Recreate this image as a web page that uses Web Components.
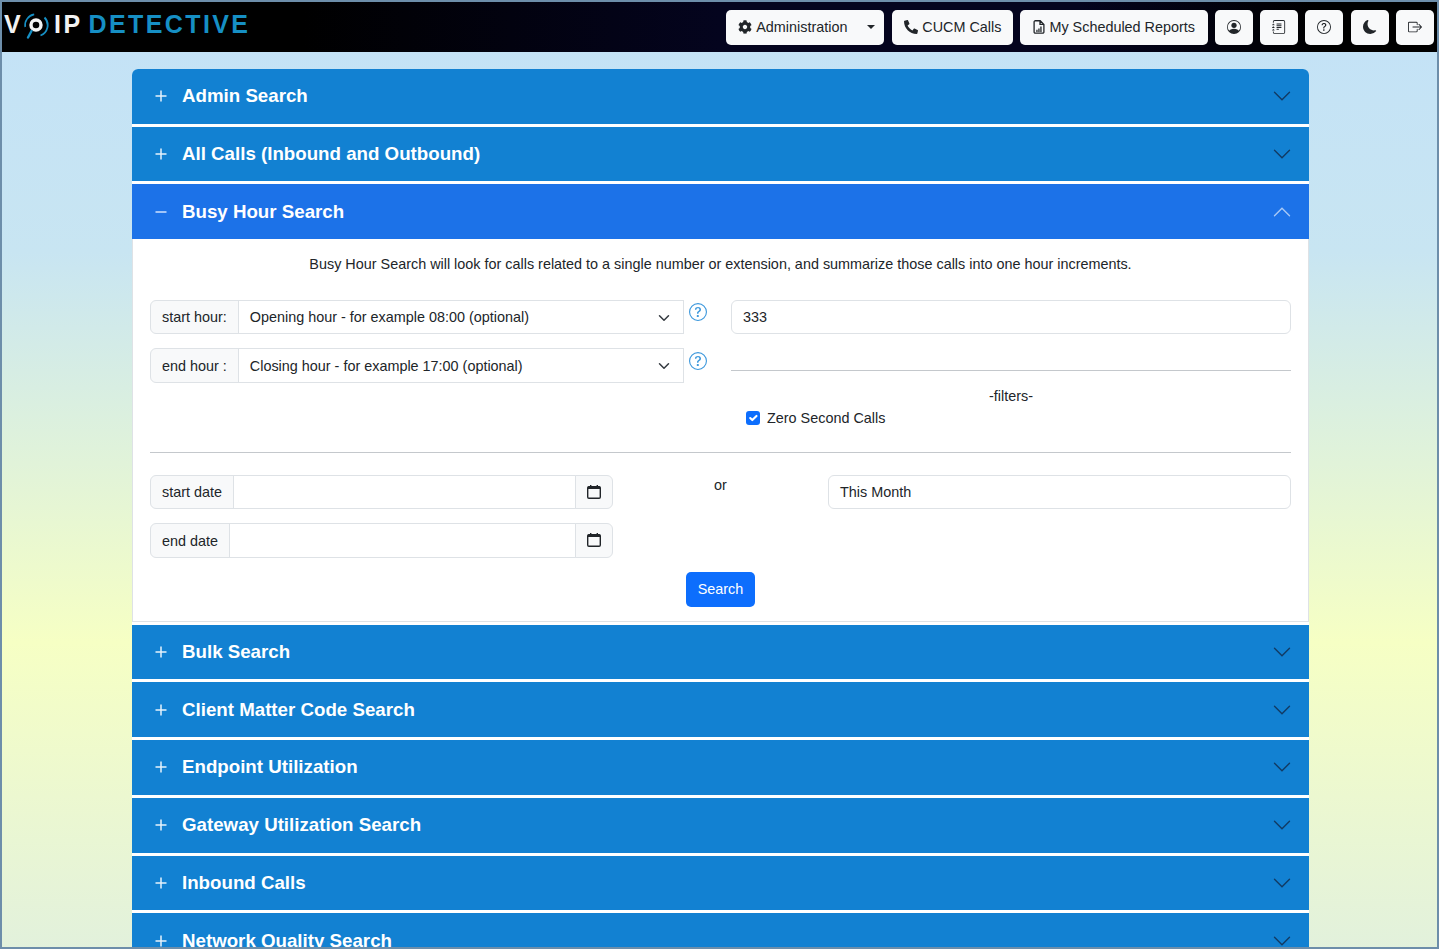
<!DOCTYPE html>
<html lang="en">
<head>
<meta charset="utf-8">
<title>VoIP Detective</title>
<style>
  html, body { margin: 0; padding: 0; height: 100%; overflow: hidden; }
  body { font-family: "Liberation Sans", Arial, sans-serif; font-size: 14.4px; color: #212529; }
</style>
</head>
<body>
<vd-app>
  <vd-navbar slot="nav"></vd-navbar>
  <vd-accordion-item heading="Admin Search"></vd-accordion-item>
  <vd-accordion-item heading="All Calls (Inbound and Outbound)"></vd-accordion-item>
  <vd-accordion-item heading="Busy Hour Search" open>
    <vd-busy-form></vd-busy-form>
  </vd-accordion-item>
  <vd-accordion-item heading="Bulk Search"></vd-accordion-item>
  <vd-accordion-item heading="Client Matter Code Search"></vd-accordion-item>
  <vd-accordion-item heading="Endpoint Utilization"></vd-accordion-item>
  <vd-accordion-item heading="Gateway Utilization Search"></vd-accordion-item>
  <vd-accordion-item heading="Inbound Calls"></vd-accordion-item>
  <vd-accordion-item heading="Network Quality Search"></vd-accordion-item>
</vd-app>

<script>
const icons = {
  gear: `<svg viewBox="0 0 512 512" width="14" height="14" fill="currentColor"><path d="M487.4 315.7l-42.6-24.6c4.3-23.2 4.3-47 0-70.2l42.6-24.6c4.9-2.8 7.1-8.6 5.5-14-11.1-35.6-30-67.8-54.7-94.6-3.8-4.1-10-5.1-14.8-2.3L380.8 110c-17.9-15.4-38.5-27.3-60.8-35.1V25.8c0-5.6-3.9-10.5-9.4-11.7-36.7-8.2-74.3-7.8-109.2 0-5.5 1.2-9.4 6.1-9.4 11.7V75c-22.2 7.9-42.8 19.8-60.8 35.1L88.7 85.5c-4.9-2.8-11-1.9-14.8 2.3-24.7 26.7-43.6 58.9-54.7 94.6-1.7 5.4.6 11.2 5.5 14L67.3 221c-4.3 23.2-4.3 47 0 70.2l-42.6 24.6c-4.9 2.8-7.1 8.6-5.5 14 11.1 35.6 30 67.8 54.7 94.6 3.8 4.1 10 5.1 14.8 2.3l42.6-24.6c17.9 15.4 38.5 27.3 60.8 35.1v49.2c0 5.6 3.9 10.5 9.4 11.7 36.7 8.2 74.3 7.8 109.2 0 5.5-1.2 9.4-6.1 9.4-11.7v-49.2c22.2-7.9 42.8-19.8 60.8-35.1l42.6 24.6c4.9 2.8 11 1.9 14.8-2.3 24.7-26.7 43.6-58.9 54.7-94.6 1.5-5.5-.7-11.3-5.6-14.1zM256 336c-44.1 0-80-35.9-80-80s35.9-80 80-80 80 35.9 80 80-35.9 80-80 80z"/></svg>`,
  phone: `<svg viewBox="0 0 512 512" width="14" height="14" fill="currentColor" style="transform:scaleX(-1)"><path d="M493.4 24.6l-104-24c-11.3-2.6-22.9 3.3-27.5 13.9l-48 112c-4.2 9.8-1.4 21.3 6.9 28l60.6 49.6c-36 76.7-98.9 140.5-177.2 177.2l-49.6-60.6c-6.8-8.3-18.2-11.1-28-6.9l-112 48C3.9 366.5-2 378.1.6 389.4l24 104C27.1 504.2 36.7 512 48 512c256.1 0 464-207.5 464-464 0-11.2-7.7-20.9-18.6-23.4z"/></svg>`,
  report: `<svg viewBox="0 0 14 14" width="14" height="14"><path d="M3 .75h5.2L11.9 4.4V12a1.2 1.2 0 0 1-1.2 1.2H3.3A1.2 1.2 0 0 1 2.1 12V1.95A1.2 1.2 0 0 1 3.3.75zM8 1v3.4h3.6" fill="none" stroke="currentColor" stroke-width="1.3"/><path d="M4.3 9.8h1.3v2.2H4.3zM6.3 8.4h1.3V12H6.3zM8.3 6.6h1.3V12H8.3z" fill="currentColor"/></svg>`,
  person: `<svg viewBox="0 0 16 16" width="14" height="14" fill="currentColor"><path d="M11 6a3 3 0 1 1-6 0 3 3 0 0 1 6 0z"/><path fill-rule="evenodd" d="M0 8a8 8 0 1 1 16 0A8 8 0 0 1 0 8zm8-7a7 7 0 0 0-5.468 11.37C3.242 11.226 4.805 10 8 10s4.757 1.225 5.468 2.37A7 7 0 0 0 8 1z"/></svg>`,
  journal: `<svg viewBox="0 0 16 16" width="14" height="14" fill="currentColor"><path d="M5 10.5a.5.5 0 0 1 .5-.5h2a.5.5 0 0 1 0 1h-2a.5.5 0 0 1-.5-.5zm0-2a.5.5 0 0 1 .5-.5h5a.5.5 0 0 1 0 1h-5a.5.5 0 0 1-.5-.5zm0-2a.5.5 0 0 1 .5-.5h5a.5.5 0 0 1 0 1h-5a.5.5 0 0 1-.5-.5zm0-2a.5.5 0 0 1 .5-.5h5a.5.5 0 0 1 0 1h-5a.5.5 0 0 1-.5-.5z"/><path d="M3 0h10a2 2 0 0 1 2 2v12a2 2 0 0 1-2 2H3a2 2 0 0 1-2-2v-1h1v1a1 1 0 0 0 1 1h10a1 1 0 0 0 1-1V2a1 1 0 0 0-1-1H3a1 1 0 0 0-1 1v1H1V2a2 2 0 0 1 2-2z"/><path d="M1 5v-.5a.5.5 0 0 1 1 0V5h.5a.5.5 0 0 1 0 1h-2a.5.5 0 0 1 0-1H1zm0 3v-.5a.5.5 0 0 1 1 0V8h.5a.5.5 0 0 1 0 1h-2a.5.5 0 0 1 0-1H1zm0 3v-.5a.5.5 0 0 1 1 0v.5h.5a.5.5 0 0 1 0 1h-2a.5.5 0 0 1 0-1H1z"/></svg>`,
  question: `<svg viewBox="0 0 16 16" width="14" height="14" fill="currentColor"><path d="M8 15A7 7 0 1 1 8 1a7 7 0 0 1 0 14zm0 1A8 8 0 1 0 8 0a8 8 0 0 0 0 16z"/><path d="M5.255 5.786a.237.237 0 0 0 .241.247h.825c.138 0 .248-.113.266-.25.09-.656.54-1.134 1.342-1.134.686 0 1.314.343 1.314 1.168 0 .635-.374.927-.965 1.371-.673.489-1.206 1.06-1.168 1.987l.003.217a.25.25 0 0 0 .25.246h.811a.25.25 0 0 0 .25-.25v-.105c0-.718.273-.927 1.01-1.486.609-.463 1.244-.977 1.244-2.056 0-1.511-1.276-2.241-2.673-2.241-1.267 0-2.655.59-2.75 2.286zm1.557 5.763c0 .533.425.927 1.01.927.609 0 1.028-.394 1.028-.927 0-.552-.42-.94-1.029-.94-.584 0-1.009.388-1.009.94z"/></svg>`,
  moon: `<svg viewBox="0 0 16 16" width="14" height="14" fill="currentColor"><path d="M6 .278a.768.768 0 0 1 .08.858 7.208 7.208 0 0 0-.878 3.46c0 4.021 3.278 7.277 7.318 7.277.527 0 1.04-.055 1.533-.16a.787.787 0 0 1 .81.316.733.733 0 0 1-.031.893A8.349 8.349 0 0 1 8.344 16C3.734 16 0 12.286 0 7.71 0 4.266 2.114 1.312 5.124.06A.752.752 0 0 1 6 .278z"/></svg>`,
  logout: `<svg viewBox="0 0 16 16" width="14" height="14" fill="currentColor"><path fill-rule="evenodd" d="M10 12.5a.5.5 0 0 1-.5.5h-8a.5.5 0 0 1-.5-.5v-9a.5.5 0 0 1 .5-.5h8a.5.5 0 0 1 .5.5v2a.5.5 0 0 0 1 0v-2A1.5 1.5 0 0 0 9.5 2h-8A1.5 1.5 0 0 0 0 3.5v9A1.5 1.5 0 0 0 1.5 14h8a1.5 1.5 0 0 0 1.5-1.5v-2a.5.5 0 0 0-1 0v2z"/><path fill-rule="evenodd" d="M15.854 8.354a.5.5 0 0 0 0-.708l-3-3a.5.5 0 0 0-.708.708L14.293 7.5H5.5a.5.5 0 0 0 0 1h8.793l-2.147 2.146a.5.5 0 0 0 .708.708l3-3z"/></svg>`,
  calendar: `<svg viewBox="0 0 16 16" width="16" height="16"><rect x="1.7" y="2.6" width="12.6" height="11.7" rx="1.2" fill="none" stroke="currentColor" stroke-width="1.4"/><path d="M2 2.5h12v2.4H2zM4 1h1.4v2H4zM10.6 1H12v2h-1.4z" fill="currentColor"/></svg>`,
  chevron: `<svg viewBox="0 0 16 16" width="12" height="12" fill="none" stroke="#343a40" stroke-width="2" stroke-linecap="round" stroke-linejoin="round"><path d="M2 5l6 6 6-6"/></svg>`,
  check: `<svg viewBox="0 0 20 20" width="14" height="14" fill="none" stroke="#fff" stroke-width="3" stroke-linecap="round" stroke-linejoin="round"><path d="M6 10l3 3 6-6"/></svg>`
};

class VdApp extends HTMLElement {
  connectedCallback() {
    this.attachShadow({mode: 'open'});
    this.shadowRoot.innerHTML = `
      <style>
        :host {
          display: flex;
          flex-direction: column;
          box-sizing: border-box;
          height: 949px;
          overflow: hidden;
          border: 2px solid #6d8eaa;
          background: linear-gradient(180deg, #c3e2f7 0, #c8e5f2 250px, #f6ffc4 640px, #e2f1dc 947px);
        }
        .main {
          padding: 16.75px 0 0 130px;
        }
        .accordion {
          width: 1177px;
          background: #fff;
          border-radius: 6px 6px 0 0;
          overflow: hidden;
        }
      </style>
      <slot name="nav"></slot>
      <div class="main"><div class="accordion"><slot></slot></div></div>
    `;
  }
}

class VdNavbar extends HTMLElement {
  connectedCallback() {
    this.attachShadow({mode: 'open'});
    this.shadowRoot.innerHTML = `
      <style>
        :host {
          display: flex;
          align-items: center;
          justify-content: space-between;
          flex: none;
          height: 50px;
          padding: 0 3px 0 2px;
          box-sizing: border-box;
          background: linear-gradient(90deg, #000 0, #000 300px, #04041e 50%, #04041e 75%, #000 92%);
        }
        .logo {
          display: flex;
          align-items: center;
          margin-top: -6px;
          font: bold 25px/30px "Liberation Sans", Arial, sans-serif;
          letter-spacing: 2.4px;
          color: #f2f2f2;
          white-space: nowrap;
        }
        .logo svg { margin: 6px 5px 0 0; flex: none; }
        .logo b { color: #168fc4; margin-left: 6px; font-weight: bold; }
        .btns { display: flex; align-items: center; gap: 7px; }
        .btn {
          display: flex;
          align-items: center;
          gap: 4px;
          box-sizing: border-box;
          height: 35px;
          padding: 0 12px;
          background: #f8f9fa;
          border-radius: 5px;
          color: #212529;
          white-space: nowrap;
          font-size: 14.4px;
        }
        .btn.icon { width: 38px; padding: 0; justify-content: center; }
        .btn.admin { width: 158px; gap: 4px; margin-right: 1px; }
        .btn.reports { gap: 3px; padding-right: 13px; }
        .caret {
          margin-left: auto;
          margin-right: -3px;
          border: 4px solid transparent;
          border-top-color: #212529;
          border-bottom: 0;
        }
        .btn.moon { margin-left: 1px; }
      </style>
      <div class="logo">
        <span>V</span>
        <svg width="26" height="28" viewBox="0 0 26 28" fill="none">
          <circle cx="13" cy="12" r="5" stroke="#f2f2f2" stroke-width="3.4"/>
          <path d="M2.2 14a11 11 0 0 1 9-12.6" stroke="#168fc4" stroke-width="1.6"/>
          <path d="M21.5 4.5a11 11 0 0 1-4 18" stroke="#168fc4" stroke-width="1.8"/>
          <path d="M8.5 18l-3.5 6.5" stroke="#168fc4" stroke-width="2.4" stroke-linecap="round"/>
        </svg>
        <span>IP</span><b>DETECTIVE</b>
      </div>
      <div class="btns">
        <div class="btn admin">${icons.gear}<span>Administration</span><span class="caret"></span></div>
        <div class="btn">${icons.phone}<span>CUCM Calls</span></div>
        <div class="btn reports">${icons.report}<span>My Scheduled Reports</span></div>
        <div class="btn icon">${icons.person}</div>
        <div class="btn icon">${icons.journal}</div>
        <div class="btn icon">${icons.question}</div>
        <div class="btn icon moon">${icons.moon}</div>
        <div class="btn icon">${icons.logout}</div>
      </div>
    `;
  }
}

class VdAccordionItem extends HTMLElement {
  connectedCallback() {
    const open = this.hasAttribute('open');
    this.attachShadow({mode: 'open'});
    this.shadowRoot.innerHTML = `
      <style>
        :host { display: block; margin-top: 3px; }
        :host(:first-of-type) { margin-top: 0; }
        .head {
          display: flex;
          align-items: center;
          box-sizing: border-box;
          height: 54.75px;
          padding: 0 17px 0 23px;
          background: ${open ? '#1c72e8' : '#1281d2'};
          color: #fff;
          font: bold 18.72px/24px "Liberation Sans", Arial, sans-serif;
        }
        .sign { flex: none; width: 27px; }
        .sign svg { display: block; }
        .title { flex: 1; }
        .chev { flex: none; display: block; }
        .body {
          display: ${open ? 'block' : 'none'};
          border: solid #dee2e6;
          border-width: 0 1px 1px;
          background: #fff;
        }
      </style>
      <div class="head">
        <span class="sign"><svg width="12" height="12" viewBox="0 0 12 12" stroke="${open ? '#cfe2ff' : '#e6f2fb'}" stroke-width="1.5">
          <path d="M0.5 6h11${open ? '' : 'M6 .5v11'}"/></svg></span>
        <span class="title">${this.getAttribute('heading')}</span>
        <svg class="chev" width="20" height="20" viewBox="0 0 16 16" fill="none" stroke="${open ? '#a9c9f5' : '#123a63'}" stroke-width="1.1" stroke-linecap="round">
          <path d="${open ? 'M2 11l6-6 6 6' : 'M2 5l6 6 6-6'}"/></svg>
      </div>
      <div class="body"><slot></slot></div>
    `;
  }
}

class VdInputGroup extends HTMLElement {
  connectedCallback() {
    const kind = this.getAttribute('kind');
    const value = this.getAttribute('value') || '';
    const label = this.getAttribute('label');
    this.attachShadow({mode: 'open'});
    this.shadowRoot.innerHTML = `
      <style>
        :host {
          display: flex;
          box-sizing: border-box;
          height: 34.25px;
          font-size: 14.4px;
          line-height: 21px;
          color: #212529;
        }
        .label, .field, .addon {
          display: flex;
          align-items: center;
          box-sizing: border-box;
          border: 1px solid #dee2e6;
        }
        .label {
          flex: none;
          padding: 1.5px 11px 0;
          background: #f8f9fa;
          border-radius: 6px 0 0 6px;
          white-space: nowrap;
        }
        .field {
          flex: 1;
          min-width: 0;
          margin-left: -1px;
          padding: 1.5px 12px 0 11px;
          background: #fff;
          justify-content: space-between;
        }
        .field.select svg { margin-right: 1px; }
        .field.bare { margin-left: 0; border-radius: 6px; }
        .addon {
          flex: none;
          width: 38px;
          margin-left: -1px;
          justify-content: center;
          background: #f8f9fa;
          border-radius: 0 6px 6px 0;
        }
      </style>
      ${label ? `<div class="label">${label}</div>` : ''}
      <div class="field ${kind || ''} ${label ? '' : 'bare'}"><span>${value}</span>${kind === 'select' ? icons.chevron : ''}</div>
      ${kind === 'date' ? `<div class="addon">${icons.calendar}</div>` : ''}
    `;
  }
}

class VdBusyForm extends HTMLElement {
  connectedCallback() {
    this.attachShadow({mode: 'open'});
    this.shadowRoot.innerHTML = `
      <style>
        :host {
          display: block;
          box-sizing: border-box;
          height: 381.5px;
          padding: 14.5px 17px 0;
          font-size: 14.4px;
          line-height: 21px;
          color: #212529;
        }
        p { margin: 0 0 25.5px; text-align: center; }
        .top {
          display: grid;
          grid-template-columns: 534px 560px;
          justify-content: space-between;
        }
        .col { display: flex; flex-direction: column; gap: 14px; }
        .line { display: flex; align-items: flex-start; }
        .line vd-input-group { width: 534px; flex: none; }
        .help { flex: none; width: 0; margin: 3px 0 0 5px; color: #3d98dc; }
        .line + .line .help { margin-top: 3.75px; }
        .help svg { width: 18px; height: 18px; display: block; }
        hr { border: 0; border-top: 1px solid #c4c8cc; margin: 0; }
        .right hr { margin-top: 35.75px; }
        .filters { text-align: center; margin-top: 15px; }
        .check { display: flex; align-items: center; gap: 7px; margin: 1px 0 0 15px; }
        .box { width: 14px; height: 14px; margin-top: -1px; border-radius: 3px; background: #0d6efd; display: block; }
        .box svg { display: block; }
        .rule { margin-top: 23px; }
        .dates {
          display: grid;
          grid-template-columns: 463px 1fr 463px;
          margin-top: 22px;
        }
        .or { text-align: center; }
        .actions { display: flex; justify-content: center; margin-top: 14px; }
        .search {
          box-sizing: border-box;
          height: 35px;
          padding: 0 12px;
          display: flex;
          align-items: center;
          background: #0d6efd;
          color: #fff;
          border-radius: 5px;
        }
      </style>
      <p>Busy Hour Search will look for calls related to a single number or extension, and summarize those calls into one hour increments.</p>
      <div class="top">
        <div class="col">
          <div class="line"><vd-input-group label="start hour:" kind="select" value="Opening hour - for example 08:00 (optional)"></vd-input-group><span class="help">${icons.question}</span></div>
          <div class="line"><vd-input-group label="end hour :" kind="select" value="Closing hour - for example 17:00 (optional)"></vd-input-group><span class="help">${icons.question}</span></div>
        </div>
        <div class="right">
          <vd-input-group value="333"></vd-input-group>
          <hr>
          <div class="filters">-filters-</div>
          <div class="check"><span class="box">${icons.check}</span><span>Zero Second Calls</span></div>
        </div>
      </div>
      <hr class="rule">
      <div class="dates">
        <div class="col">
          <vd-input-group label="start date" kind="date"></vd-input-group>
          <vd-input-group label="end date" kind="date"></vd-input-group>
        </div>
        <div class="or">or</div>
        <vd-input-group value="This Month"></vd-input-group>
      </div>
      <div class="actions"><div class="search">Search</div></div>
    `;
  }
}

customElements.define('vd-app', VdApp);
customElements.define('vd-navbar', VdNavbar);
customElements.define('vd-accordion-item', VdAccordionItem);
customElements.define('vd-input-group', VdInputGroup);
customElements.define('vd-busy-form', VdBusyForm);
</script>
</body>
</html>
